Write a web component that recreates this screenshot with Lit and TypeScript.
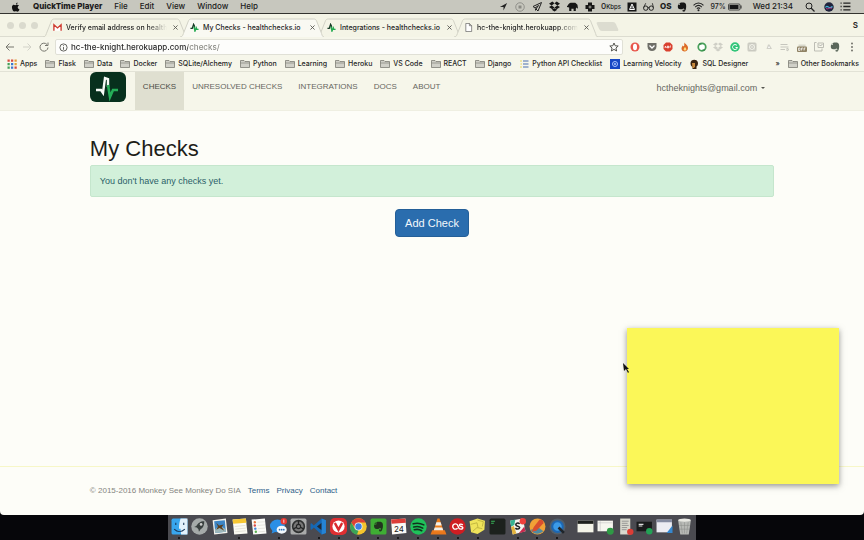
import { LitElement, html, svg, css, nothing } from "lit";
import { customElement, property } from "lit/decorators.js";
import { classMap } from "lit/directives/class-map.js";

const icon = (body: unknown, cls = "i10", box = "0 0 20 20") =>
  html`<svg class=${cls} viewBox=${box} aria-hidden="true">${body}</svg>`;

const pulse = svg`<path d="M1 12h4l3-9 2 4v6" fill="none" stroke="#173c26" stroke-width="3"/><path d="M9 8l2 10 3-7 1 3h4" fill="none" stroke="#22a94f" stroke-width="3"/>`;
const folder = svg`<path d="M1 3h7l2 2h9v12H1z" fill="#d0d0c8" stroke="#77776f" stroke-width="1.5"/><path d="M1 8h18" stroke="#77776f" stroke-width="1.2"/>`;
const elephant = svg`<path d="M6 2l2-1h4c3 0 5 1 6 4 1 5 0 10-2 13-1 2-5 2-5-1 0-2 3-2 3-1l-1 1c3 0 2-4-1-4-1 3-5 1-8 1-2-1-3-5-2-8h4z" /><path d="M2 5l3-3v3z"/>`;
const dropbox = svg`<path d="M6 1l4 3-5 4-5-3zM14 1l-4 3 5 4 5-3zM0 11l5-3 5 4-4 3zM20 11l-5-3-5 4 4 3zM5 16l5-3 5 3-5 3z"/>`;

const tabs = [
  { title: "Verify email address on health", fade: true, icon: svg`<path d="M2 17V4l8 7 8-7v13" fill="#fff" stroke="#cf3b31" stroke-width="3"/>` },
  { title: "My Checks - healthchecks.io", active: true, icon: pulse },
  { title: "Integrations - healthchecks.io", icon: pulse },
  { title: "hc-the-knight.herokuapp.com", fade: true, icon: svg`<path d="M4 1h8l5 5v13H4zM12 1v5h5" fill="#fff" stroke="#666" stroke-width="1.6"/>` },
];

const apps = svg`${["#d84b3f", "#d84b3f", "#e39a3a", "#44a05a", "#3b78d0", "#e0a63a", "#44a05a", "#3b78d0", "#d84b3f"].map(
  (c, i) => svg`<rect x=${1 + (i % 3) * 7} y=${1 + Math.floor(i / 3) * 7} width="4.5" height="4.5" fill=${c}/>`)}`;

const bookmarks = [
  { t: "Apps", icon: apps },
  ...["Flask", "Data", "Docker", "SQLite/Alchemy", "Python", "Learning", "Heroku", "VS Code", "REACT", "Django"].map((t) => ({ t, icon: folder })),
  { t: "Python API Checklist", icon: svg`<path d="M8 4h11M8 10h11M8 16h11" stroke="#4a6fb0" stroke-width="2"/><path d="M2 4h4M3 10h3M2 16h4" stroke="#e6d45a" stroke-width="2"/>` },
  { t: "Learning Velocity", icon: svg`<rect width="20" height="20" fill="#1747c4"/><circle cx="10" cy="10" r="5" fill="none" stroke="#a9c4ff" stroke-width="2"/><circle cx="10" cy="10" r="2" fill="#a9c4ff"/>` },
  { t: "SQL Designer", icon: svg`<path d="M3 8c0-9 15-9 15 0 0 4-1 6-3 7v5H7v-4c-3-2-4-4-4-8z" fill="#3a2412"/><path d="M6 8h6v7l-2 3H7z" fill="#c98a3d"/>` },
];

const extensions = [
  { n: "Opera", d: svg`<ellipse cx="10" cy="10" rx="9" ry="9" fill="#e8564b"/><ellipse cx="10" cy="10" rx="4" ry="6.5" fill="#fff"/>` },
  { n: "Pocket", d: svg`<path d="M1 2h18v7c0 12-18 12-18 0z" fill="#6e6e68"/><path d="M5 7l5 5 5-5" fill="none" stroke="#fff" stroke-width="2.5"/>` },
  { n: "Adblock", d: svg`<path d="M6 1h8l5 5v8l-5 5H6l-5-5V6z" fill="#d9402f"/><path d="M4 12l1-4 2 4M9 12V8h2v4H9M14 12V8h2" fill="none" stroke="#fff" stroke-width="1.5"/>` },
  { n: "Flame", d: svg`<path d="M9 1c2 4 7 5 7 11 0 9-13 9-13 1 0-3 2-4 2-6l3 2c1-3 0-5 1-8z" fill="#dc6a27"/><path d="M10 10c4 4 3 7 0 7s-4-3 0-7z" fill="#ffe07a"/>` },
  { n: "Sync", d: svg`<circle cx="10" cy="10" r="7.5" fill="#fff" stroke="#48a05a" stroke-width="3.5"/><path d="M4 4h5M16 16h-5" stroke="#2b7c3e" stroke-width="2"/>` },
  { n: "Dropbox", d: svg`<g fill="#cfcfc6">${dropbox}</g>` },
  { n: "Grammar", d: svg`<circle cx="10" cy="10" r="9.5" fill="#32c579"/><path d="M14 7a5 5 0 1 0 1 4h-4" fill="none" stroke="#fff" stroke-width="2"/>` },
  { n: "React", d: svg`<rect x="1" y="1" width="18" height="18" rx="3" fill="#c9c9c0"/><circle cx="10" cy="10" r="5" fill="none" stroke="#f5f5ec" stroke-width="2"/><path d="M3 4l14 12M17 4L3 16" stroke="#f5f5ec"/>` },
  { n: "Drive", d: svg`<path d="M8 5h3l5 9H5z" fill="#d0d0c8"/><path d="M10 8l2 4H8z" fill="#fff"/>` },
  { n: "Queue", d: svg`<path d="M1 5h14M1 10h16M1 15h9M14 12v6l4-3z" fill="none" stroke="#c6c6be" stroke-width="2"/>` },
  { n: "Off switch", d: svg`<path d="M3 5h14v5H3z" fill="#d8d8cc"/><rect y="9" width="20" height="11" rx="2" fill="#8f8264"/><path d="M3 12h3v5H3zM9 17v-5h3M9 14h2M14 17v-5h3M14 14h2" fill="none" stroke="#fff" stroke-width="1.4"/>` },
  { n: "Notes", d: svg`<path d="M5 1H1v17h15v-5M8 2h11v9H8z" fill="none" stroke="#bdbdb4" stroke-width="2"/><path d="M10 5l3 3 4-4" fill="none" stroke="#999" stroke-width="1.5"/>` },
  { n: "Evernote", d: svg`<g fill="#5a665a">${elephant}</g>` },
  { n: "Menu", d: svg`<g fill="#66665f"><circle cx="10" cy="3" r="1.8"/><circle cx="10" cy="10" r="1.8"/><circle cx="10" cy="17" r="1.8"/></g>` },
];

const tile = (c: string) => svg`<rect x="1" y="1" width="30" height="30" rx="3" fill=${c}/>`;
const dock: { n: string; on?: boolean; d: unknown }[] = [
  { n: "Finder", on: true, d: svg`${tile("#38a6ee")}<path d="M18 1h13v30H19l-1-11h-3c0-7 1-13 3-19z" fill="#e3f1fb"/><path d="M9 9v4M24 9v4M6 21c6 6 14 6 20 0" fill="none" stroke="#173657" stroke-width="2"/>` },
  { n: "Launchpad", d: svg`<circle cx="16" cy="16" r="15.5" fill="#a5aaa9"/><path d="M25 6c-8 0-12 4-15 9l-4 2 5 1 3 3 1 5 3-5c5-3 7-7 7-15z" fill="#39403f"/><circle cx="19" cy="12" r="2.5" fill="#ccc"/>` },
  { n: "Mail", d: svg`<path d="M3 4l25-3 3 27-25 3z" fill="#f2f2ec"/><path d="M6 6l20-2 2 22-20 2z" fill="#3d86c6"/><path d="M7 22l9-8 12 7v5l-20 2z" fill="#9db6b8"/><path d="M10 9l5 5 9-2-4 5 5 7-9-5-6 3 3-6z" fill="#5b4021"/>` },
  { n: "Notes", on: true, d: svg`<path d="M3 3l25-2 3 28-25 2z" fill="#fbfbf3"/><path d="M3 3l25-2 1 8-25 2z" fill="#f6c733"/><path d="M7 16l20-2M8 21l20-2M8 26l20-2" stroke="#cfcfc5"/>` },
  { n: "Reminders", d: svg`<path d="M3 3l25-2 3 28-25 2z" fill="#fbfbf7"/><circle cx="9" cy="8" r="2.3" fill="#e8753c"/><circle cx="9" cy="14" r="2.3" fill="#d84848"/><circle cx="10" cy="20" r="2.3" fill="#3f83d8"/><circle cx="11" cy="26" r="2.3" fill="#58b14f"/><path d="M14 8l14-1M14 14l14-1M15 20l13-1M16 26l13-1" stroke="#d3d3cb"/>` },
  { n: "Messages", on: true, d: svg`<ellipse cx="14" cy="15" rx="14" ry="12" fill="#2b8fe6"/><path d="M5 23l-2 6 8-3z" fill="#2b8fe6"/><ellipse cx="22" cy="22" rx="9.5" ry="7.5" fill="#f4f8fc"/><g fill="#2c75b8"><circle cx="18" cy="22" r="1.6"/><circle cx="22" cy="22" r="1.6"/><circle cx="26" cy="22" r="1.6"/></g><circle cx="26" cy="6" r="6" fill="#e93a34"/><path d="M26 3v6" stroke="#fff" stroke-width="1.5"/>` },
  { n: "System Preferences", d: svg`${tile("#a9abab")}<circle cx="16" cy="16" r="11" fill="#777" stroke="#2f3131" stroke-width="3"/><circle cx="16" cy="16" r="4" fill="none" stroke="#252727" stroke-width="2"/><path d="M16 5v8M26 21l-7-4M6 21l7-4" stroke="#252727" stroke-width="2.5"/>` },
  { n: "Code", on: true, d: svg`<path d="M22 1l8 3v24l-8 3L7 18l-4 4-2-1V11l2-1 4 4z" fill="#1568b5"/><path d="M22 9v14l-9-7z" fill="#1e2a38"/><path d="M22 1l8 3v24l-8 3z" fill="#2684d4"/>` },
  { n: "Vivaldi", on: true, d: svg`<rect width="32" height="32" rx="9" fill="#df2f32"/><circle cx="16" cy="16" r="11.5" fill="#fff"/><path d="M10 11l6 11 6-11" fill="none" stroke="#d92b2e" stroke-width="4.5" stroke-linecap="round"/>` },
  { n: "Chrome", on: true, d: svg`<circle cx="16" cy="16" r="15.5" fill="#f5c52d"/><path d="M2.5 8.5C8-2 24-2 29.5 8.5H16l-6 11z" fill="#dd4236"/><path d="M2.5 8.5l7 12 6.500 3-3 8C1 29-2.500 18 2.500 8.500z" fill="#3ba457"/><circle cx="16" cy="16" r="7.500" fill="#f1f4f6"/><circle cx="16" cy="16" r="6" fill="#3e7fe0"/>` },
  { n: "Evernote", on: true, d: svg`${tile("#3fae34")}<g transform="translate(6 6)" fill="#22331f">${elephant}</g>` },
  { n: "Calendar", on: true, d: svg`<path d="M2 3l27-2 2 27-27 3z" fill="#fafaf6"/><path d="M2 3l27-2 1 8-27 2z" fill="#dd3d38"/><text x="17" y="26" text-anchor="middle" font-family="Inter, sans-serif" font-size="15" fill="#222">24</text>` },
  { n: "Spotify", on: true, d: svg`<circle cx="16" cy="16" r="15.5" fill="#1fc15a"/><path d="M6 11c7-2 14-1 20 2M7 17c6-2 12-1 17 2M8 22c5-1 10-1 14 2" fill="none" stroke="#12301d" stroke-width="3" stroke-linecap="round"/>` },
  { n: "VLC", on: true, d: svg`<path d="M4 23h24l3 8H1z" fill="#e8771b"/><path d="M14 1h4l8 26H6z" fill="#ee7d1d"/><path d="M12 8h8l2 6H10zM9 18h14l2 5H7z" fill="#f4f0e8"/>` },
  { n: "Last.fm", on: true, d: svg`<circle cx="16" cy="16" r="15.5" fill="#cf1d22"/><path d="M16 19a5 5 0 1 1 0-6l2 5c1 4 8 4 8 0 0-3-7-1-6-5 0-2 4-2 6 0" fill="none" stroke="#fff" stroke-width="2.6"/>` },
  { n: "Stickies", on: true, d: svg`<path d="M1 6l15-5 14 4-1 17-13 8L4 27z" fill="#efe35a"/><path d="M3 12l12-3 2 9M16 4l11 3-2 9M7 25l8-7 10 2" fill="none" stroke="#b9ac3a" stroke-width="1.5"/>` },
  { n: "Terminal", d: svg`${tile("#1c211d")}<path d="M4 6h7M4 10h5" stroke="#37b457" stroke-width="2"/>` },
  { n: "Slack", on: true, d: svg`<path d="M2 5l24-4 5 24-24 6z" fill="#f4f4ef"/><path d="M2 5l10-2-2 10-6 3z" fill="#37b391"/><path d="M4 17l5-2 5 14-7 2z" fill="#e3b33c"/><path d="M18 29l13-4-2-9z" fill="#c9294d"/><path d="M20 11c-3-3-8-1-7 2s7 2 7 5-5 4-8 1" fill="none" stroke="#242424" stroke-width="3"/><circle cx="26" cy="6" r="6" fill="#ee403b"/>` },
  { n: "Postgres app", on: true, d: svg`<circle cx="16" cy="16" r="15" fill="#f1a136"/><path d="M3 22c5 9 16 10 24 3l-8-6z" fill="#4e8aa1"/><path d="M20 3c6 0 8 4 7 7L14 24l-9 2 4-9z" fill="#d84e2e"/>` },
  { n: "QuickTime Player", on: true, d: svg`<circle cx="16" cy="16" r="15" fill="#52606c"/><circle cx="16" cy="16" r="10" fill="#3b9be8" stroke="#1d68b4" stroke-width="4"/><path d="M18 18l10 10" stroke="#20252a" stroke-width="5"/>` },
];
const shelf: { n: string; d: unknown }[] = [
  { n: "Window", d: svg`<path d="M1 5h30v22H1z" fill="#f4f4e8"/><path d="M1 5h30v6H1z" fill="#1d1f1c"/>` },
  { n: "Spreadsheet", d: svg`<path d="M1 5h29v20H1z" fill="#f6f6ef"/><path d="M2 9h27M6 6v18" stroke="#bbb"/><circle cx="25" cy="25" r="6.500" fill="#2f9a45"/>` },
  { n: "Document", d: svg`<path d="M6 1h19v30H6z" fill="#d9d9ce"/><path d="M9 6h13M9 10h11M9 14h13M9 18h10M9 22h9" stroke="#888" stroke-width="1.500"/><circle cx="25" cy="26" r="6" fill="#dc3d36"/>` },
  { n: "Video", d: svg`<path d="M1 7h29v18H1z" fill="#191b1b"/><path d="M5 12h9M5 15h7" stroke="#ddd" stroke-width="2"/><circle cx="25" cy="25" r="6" fill="#23a155"/>` },
  { n: "Mail window", d: svg`<path d="M1 3h29v24H1z" fill="#ececf2"/><path d="M1 3h29v5H1z" fill="#858ba0"/><path d="M20 28l11-14v14z" fill="#3688cf"/>` },
  { n: "Trash", d: svg`<path d="M4 4h24l-4 27H8z" fill="#b7b9b5"/><ellipse cx="16" cy="4" rx="12" ry="3" fill="#e8e8e2"/><path d="M9 8l3 21M16 8v21M23 8l-3 21M6 14h20M7 21h18" stroke="#8c8e8a"/>` },
];

const status = {
  arrow: svg`<path d="M18 2L2 11h8v8z" fill="#222"/>`,
  record: svg`<circle cx="10" cy="10" r="8.500" fill="none" stroke="#8a8a84" stroke-width="1.800"/><path d="M7 7h6v6H7z" fill="#8a8a84"/>`,
  rocket: svg`<path d="M19 1L2 9l4 3 7-5-5 7 4 4z" fill="none" stroke="#222" stroke-width="2"/><path d="M6 12v6l3-3" fill="#222"/>`,
  cross: svg`<path d="M6 1h8v5h5v8h-5v5H6v-5H1V6h5z" fill="#161616"/><path d="M10 7v6M7 10h6" stroke="#c5c5be" stroke-width="1.500"/>`,
  box: svg`<rect x="1" y="1" width="18" height="18" fill="#161616"/><path d="M10 4l5 11H5zM10 9v4" fill="none" stroke="#fff" stroke-width="2"/>`,
  glasses: svg`<circle cx="5" cy="13" r="4" fill="none" stroke="#222" stroke-width="1.800"/><circle cx="15" cy="13" r="4" fill="none" stroke="#222" stroke-width="1.800"/><path d="M1 12l4-8M19 12l-2-8M9 12h2" stroke="#222" stroke-width="1.500" fill="none"/>`,
  wifi: svg`<path d="M1 8c5-6 13-6 18 0M4 11c4-4 8-4 12 0M7 14c2-2 4-2 6 0" fill="none" stroke="#222" stroke-width="2"/><circle cx="10" cy="17" r="1.800" fill="#222"/>`,
  search: svg`<circle cx="8" cy="8" r="6" fill="none" stroke="#222" stroke-width="2"/><path d="M12 12l7 7" stroke="#222" stroke-width="2.500"/>`,
  siri: svg`<circle cx="10" cy="10" r="9.500" fill="#20233c"/><path d="M3 11c4-7 7 5 14-2" fill="none" stroke="#45b8df" stroke-width="2.500"/><path d="M4 13c5 3 8-4 12 0" fill="none" stroke="#c23b91" stroke-width="2"/>`,
  list: svg`<path d="M1 4h2M1 10h2M1 16h2M6 4h13M6 10h13M6 16h13" stroke="#222" stroke-width="2.400"/>`,
};

const base = css`
  * { box-sizing: border-box; }
  svg { display: block; flex: none; }
  a { color: inherit; text-decoration: none; white-space: nowrap; }
  button { font: inherit; color: inherit; background: none; border: 0; padding: 0; white-space: nowrap; }
  .i9 { width: 9px; height: 9px; }
  .i10 { width: 10px; height: 10px; }
  .i11 { width: 11px; height: 11px; }
`;

@customElement("menu-bar")
class MenuBar extends LitElement {
  static styles = [base, css`
    :host { display: flex; align-items: center; justify-content: space-between; height: 14px; flex: none; padding: 0 13px 0 11px; background: #c7c7be; border-bottom: 1px solid #33332f; font: 500 8px/13px Inter, sans-serif; color: #1b1b1b; }
    nav { display: flex; align-items: center; gap: 12px; }
    .status { display: flex; align-items: center; gap: 6px; }
    .tray { display: flex; align-items: center; gap: 7px; }
    .app { font-weight: 800; }
    .kb small { font-size: 6px; }
    .os { font-weight: 800; }
    .pct { font-size: 7px; }
    .batt { width: 14px; height: 8px; }
    .power { display: flex; align-items: center; gap: 2px; margin-right: 5px; }
    .clock { margin-right: 6px; }
    .wide { margin-left: 3px; }
  `];
  render() {
    const s = status;
    return html`
      <nav aria-label="Menu">
        ${icon(svg`<path d="M13 1c0 2-1 4-3 4 0-2 1-4 3-4zM17 15c-1 3-3 5-5 4-2-1-3-1-5 0C4 20-1 9 4 6c2-1 4 1 6 0 3-1 5 0 6 1-4 2-3 6 1 8z" fill="#111"/>`)}
        <button class="app">QuickTime Player</button>
        ${["File", "Edit", "View", "Window", "Help"].map((m) => html`<button>${m}</button>`)}
      </nav>
      <div class="status">
        <div class="tray">
        ${icon(s.arrow, "i9")}${icon(s.record)}${icon(s.rocket)}${icon(svg`<g fill="#161616">${dropbox}</g>`, "i11")}
        ${icon(svg`<path d="M0 9c2 0 2-5 7-6h8l4 4 1 7-3-2-1 2v4h-4v-4H8v4H4v-6l-4-1z" fill="#161616"/>`, "i11")}${icon(s.cross)}
        </div>
        <span class="kb">0<small>Kbps</small></span>
        ${icon(s.box)}${icon(s.glasses, "i11")}<span class="os">OS</span>${icon(svg`<g fill="#161616">${elephant}</g>`)}${icon(s.wifi, "i11")}
        <span class="power"><span class="pct">97%</span>${icon(svg`<rect x="1" y="1" width="23" height="12" rx="2" fill="none" stroke="#222" stroke-width="1.500"/><rect x="3" y="3" width="18" height="8" fill="#161616"/><path d="M26 4v6" stroke="#222" stroke-width="2"/>`, "batt", "0 0 28 14")}</span>
        <span class="clock">Wed 21:34</span>
        ${icon(s.search, "i10")}${icon(s.siri, "i10 wide")}${icon(s.list, "i11")}
      </div>`;
  }
}

@customElement("browser-chrome")
class BrowserChrome extends LitElement {
  static styles = [base, css`
    :host { display: block; flex: none; background: #f6f6ea; font: 500 8px/10px Inter, sans-serif; color: #262626; }
    .strip { display: flex; align-items: flex-end; height: 23px; padding: 0 6px 0 7px; background: #f4f4e6; border-bottom: 1px solid #dcdcd0; }
    .lights { display: flex; gap: 5px; width: 36px; flex: none; align-self: center; }
    .lights i { width: 7px; height: 7px; border-radius: 50%; background: #dadace; }
    .tab { position: relative; display: flex; align-items: center; gap: 4px; flex: 0 1 144px; min-width: 0; height: 19px; margin: 0 -7px -1px 0; padding: 0 7px 0 10px; font-size: 7px; }
    .shape { position: absolute; inset: 0; width: 100%; height: 100%; }
    .shape path { fill: #f4f4e6; stroke: #d2d2c6; }
    .active .shape path { fill: #f9f9f2; }
    .active { z-index: 1; }
    .tab button, .tab .i9 { position: relative; }
    .title { flex: 1; min-width: 0; overflow: hidden; text-align: left; }
    .fade { -webkit-mask-image: linear-gradient(90deg, #000 80%, transparent); mask-image: linear-gradient(90deg, #000 80%, transparent); }
    .new { width: 19px; height: 9px; margin: 0 0 5px 7px; background: #dcdcd0; transform: skewX(24deg); border-radius: 2px; }
    .user { margin-left: auto; align-self: center; font-weight: 600; }
    .bar { display: flex; align-items: center; height: 20px; padding: 0 7px 0 5px; }
    .nav { display: flex; gap: 7px; margin-right: 6px; }
    .address { flex: 1; display: flex; align-items: center; gap: 3px; height: 16px; padding: 0 3px; background: #fdfdfb; border: 1px solid #e0e0d6; border-radius: 2px; }
    input { flex: 1; min-width: 0; border: 0; padding: 0; outline: 0; font: 500 8px/12px Inter, sans-serif; color: transparent; background: linear-gradient(90deg, #222 117px, #85857f 117px); -webkit-background-clip: text; background-clip: text; }
    .ext { display: flex; justify-content: space-between; width: 227px; margin-left: 7px; }
    .marks { display: flex; align-items: center; gap: 8px; height: 15px; padding: 0 5px 0 7px; font-size: 7px; border-bottom: 1px solid #e2e2d6; }
    .marks a { display: flex; align-items: center; gap: 3px; }
    .more { margin-left: auto; }
  `];
  render() {
    return html`
      <div class="strip">
        <div class="lights"><i></i><i></i><i></i></div>
        ${tabs.map((t) => html`
          <div class=${classMap({ tab: true, active: !!t.active })}>
            <svg class="shape" viewBox="0 0 144 19" preserveAspectRatio="none" aria-hidden="true"><path d="M0 19c3 0 3-3 4-5l4-10c1-3 2-3 4-3h121c2 0 3 0 4 3l4 10c1 2 1 5 3 5"/></svg>
            ${icon(t.icon, "i9")}
            <button class=${classMap({ title: true, fade: !!t.fade })}>${t.title}</button>
            <button aria-label="Close tab">${icon(svg`<path d="M4 4l12 12M16 4L4 16" stroke="#55554f" stroke-width="2.500"/>`, "i9", "-3 -3 26 26")}</button>
          </div>`)}
        <button class="new" aria-label="New tab"></button>
        <span class="user">S</span>
      </div>
      <div class="bar">
        <div class="nav">
          <button aria-label="Back">${icon(svg`<path d="M18 10H3M9 3l-7 7 7 7" fill="none" stroke="#77776f" stroke-width="2"/>`)}</button>
          <button aria-label="Forward">${icon(svg`<path d="M2 10h15M11 3l7 7-7 7" fill="none" stroke="#d2d2c8" stroke-width="2"/>`)}</button>
          <button aria-label="Reload">${icon(svg`<path d="M16 5a8 8 0 1 0 2 6M18 1v6h-6" fill="none" stroke="#77776f" stroke-width="2"/>`)}</button>
        </div>
        <div class="address">
          ${icon(svg`<circle cx="10" cy="10" r="8" fill="none" stroke="#55554f" stroke-width="2"/><path d="M10 9v6M10 5v2" stroke="#55554f" stroke-width="2"/>`, "i9")}
          <input aria-label="Address" value="hc-the-knight.herokuapp.com/checks/" />
          <button aria-label="Bookmark this page">${icon(svg`<path d="M10 2l2.400 5.500 6 .5-4.500 4 1.400 6-5.300-3.200L4.700 18l1.400-6L1.600 8l6-.5z" fill="none" stroke="#55554f" stroke-width="2"/>`)}</button>
        </div>
        <div class="ext">${extensions.map((e) => html`<button aria-label=${e.n}>${icon(e.d)}</button>`)}</div>
      </div>
      <nav class="marks" aria-label="Bookmarks">
        ${bookmarks.map((b) => html`<a href="#">${icon(b.icon)}${b.t}</a>`)}
        <button class="more" aria-label="More bookmarks">»</button>
        <a href="#">${icon(folder)}Other Bookmarks</a>
      </nav>`;
  }
}

@customElement("checks-page")
class ChecksPage extends LitElement {
  static styles = [base, css`
    :host { display: flex; flex-direction: column; flex: 1; min-height: 0; background: #fdfdf8; font: 9px/14px "Liberation Sans", sans-serif; color: #222; }
    .container { width: 79.2%; margin: 0 auto; }
    header { background: #f6f6ea; height: 39px; flex: none; border-bottom: 1px solid #efefe2; }
    header .container { display: flex; height: 100%; }
    .logo { width: 36px; height: 30px; margin-right: 9px; }
    header nav { display: flex; font-size: 8px; color: #66665f; }
    header nav a { padding: 8px 8px 0; }
    header nav .on { background: #dfdfd0; color: #4a4a44; }
    .user { display: flex; align-items: center; gap: 4px; margin: 0 9px 7px auto; color: #66665f; }
    .caret { border: 2px solid transparent; border-top-color: #55554f; border-bottom: 0; }
    h1 { margin: 25px 0 3px; font: 500 22px/26px "Liberation Sans", sans-serif; color: #1e1e18; }
    .alert { padding: 8px 9px; border: 1px solid #c5e6cd; border-radius: 2px; background: #d2f0da; color: #2b5f68; }
    .add { display: block; margin: 12px auto 0; padding: 5px 9px; border: 1px solid #245f98; border-radius: 4px; background: #2a6dae; color: #f3f8fc; font-size: 11px; line-height: 16px; }
    footer { margin-top: auto; border-top: 1px solid #f7f7c8; }
    footer .container { display: flex; gap: 7px; padding: 17px 0; font-size: 8px; color: #85857f; }
    footer a { color: #2d6189; }
  `];
  render() {
    return html`
      <header><div class="container">
        <svg class="logo" viewBox="0 0 36 30" role="img" aria-label="healthchecks"><rect width="36" height="30" rx="6" fill="#07301d"/><path d="M6 18h5l2 3 2-15 3 1v8" fill="none" stroke="#f6faf6" stroke-width="2.400"/><path d="M18 13l2 12 3-7h5" fill="none" stroke="#25ae58" stroke-width="2.600"/></svg>
        <nav>${["CHECKS", "UNRESOLVED CHECKS", "INTEGRATIONS", "DOCS", "ABOUT"].map((n, i) => html`<a href="#" class=${i ? nothing : "on"}>${n}</a>`)}</nav>
        <button class="user">hctheknights@gmail.com<span class="caret"></span></button>
      </div></header>
      <main class="container">
        <h1>My Checks</h1>
        <div class="alert" role="status">You don't have any checks yet.</div>
        <button class="add">Add Check</button>
      </main>
      <footer><div class="container"><span>© 2015-2016 Monkey See Monkey Do SIA</span><a href="#">Terms</a><a href="#">Privacy</a><a href="#">Contact</a></div></footer>`;
  }
}

@customElement("app-dock")
class AppDock extends LitElement {
  static styles = [base, css`
    :host { display: flex; justify-content: center; flex: none; height: 25px; background: #06060a; }
    .dock { display: flex; align-items: flex-start; width: 61%; padding: 3px 1px 0; background: #4a4a50; }
    .dock button { flex: 1; min-width: 0; display: flex; flex-direction: column; align-items: center; gap: 2px; }
    .ico { width: 17px; height: 17px; }
    .dot { width: 2px; height: 2px; border-radius: 50%; background: #0c0c0c; }
    .sep { width: 8px; }
  `];
  @property({ attribute: false }) items = dock;
  render() {
    return html`<div class="dock">
      ${this.items.map((a) => html`<button aria-label=${a.n}>${icon(a.d, "ico", "0 0 32 32")}${a.on ? html`<span class="dot"></span>` : nothing}</button>`)}
      <span class="sep"></span>
      ${shelf.map((a) => html`<button aria-label=${a.n}>${icon(a.d, "ico", "0 0 32 32")}</button>`)}
    </div>`;
  }
}

@customElement("app-root")
class AppRoot extends LitElement {
  static styles = [base, css`
    :host { display: block; position: relative; background: #06060a; }
    .desktop { display: flex; flex-direction: column; min-height: 100vh; }
    .window { display: flex; flex-direction: column; flex: 1; border-radius: 0 0 4px 4px; overflow: hidden; }
    .note { position: absolute; right: 25px; bottom: 56px; width: 212px; height: 156px; background: #fbf758; box-shadow: 0 2px 6px rgba(60, 60, 60, 0.55); }
    .cursor { position: absolute; right: 234px; bottom: 167px; width: 7px; height: 10px; }
  `];
  render() {
    return html`
      <div class="desktop">
        <menu-bar></menu-bar>
        <div class="window"><browser-chrome></browser-chrome><checks-page></checks-page></div>
        <app-dock></app-dock>
      </div>
      <div class="note"></div>
      <svg class="cursor" viewBox="0 0 7 10" aria-hidden="true"><path d="M0 0l6 6H4l2 3-1 1-2-4-2 2z" fill="#111"/></svg>`;
  }
}
